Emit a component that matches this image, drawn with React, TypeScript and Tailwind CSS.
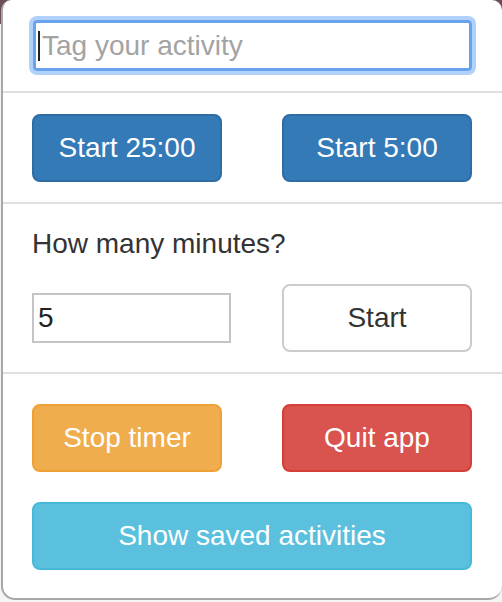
import { useState } from "react";

const font = { fontFamily: '"Liberation Sans", Arial, sans-serif' };

function Divider() {
  return <div className="h-[2px] w-full bg-[#e0e0e0]" />;
}

export default function App() {
  const [tag, setTag] = useState("");
  const [minutes, setMinutes] = useState("5");

  const btn =
    "h-[68px] w-full rounded-[8px] border-2 text-[28px] leading-[40px] text-white flex items-center justify-center";

  return (
    <div
      className="w-[502px] h-[602px] overflow-hidden bg-[linear-gradient(to_bottom,#6d4c5c_0px,#6d4c5c_24px,#f4f4f4_24px)]"
      style={font}
    >
      <div className="ml-[1px] h-[600px] w-[501px] bg-white rounded-t-[10px] rounded-b-[14px] border-l-2 border-b-2 border-[#a8a8a8] flex flex-col text-[#333]">
        {/* Tag input */}
        <div className="pt-[20px] pb-[20px] pl-[30px] pr-[30px]">
          <div className="relative">
            <input
              value={tag}
              onChange={(e) => setTag(e.target.value)}
              placeholder="Tag your activity"
              className="h-[51px] w-full rounded-[4px] border-[3px] border-[#69a2ed] shadow-[0_0_0_4px_#b0d1f9] pl-[6px] text-[28px] text-[#333] placeholder:text-[#a3a3a3] outline-none"
            />
            {tag === "" && (
              <span className="absolute left-[5px] top-[11px] h-[30px] w-[2px] bg-[#222]" />
            )}
          </div>
        </div>
        <Divider />

        {/* Quick starts */}
        <div className="grid grid-cols-2 gap-x-[60px] pt-[21px] pb-[20px] pl-[29px] pr-[30px]">
          <button className={`${btn} bg-[#337ab7] border-[#2e6da4]`}>Start 25:00</button>
          <button className={`${btn} bg-[#337ab7] border-[#2e6da4]`}>Start 5:00</button>
        </div>
        <Divider />

        {/* Custom minutes */}
        <div className="pt-[20px] pb-[20px] pl-[29px] pr-[30px]">
          <div className="text-[28px] leading-[40px] mb-[20px]">How many minutes?</div>
          <div className="grid grid-cols-2 gap-x-[60px] items-center">
            <input
              value={minutes}
              onChange={(e) => setMinutes(e.target.value)}
              className="h-[50px] w-[199px] border-2 border-[#c4c4c4] pl-[4px] text-[28px] text-[#222] outline-none"
            />
            <button className="h-[68px] w-full rounded-[8px] border-2 border-[#cccccc] bg-white text-[28px] leading-[40px] text-[#333]">
              Start
            </button>
          </div>
        </div>
        <Divider />

        {/* Controls */}
        <div className="pt-[30px] pl-[29px] pr-[30px] flex flex-col gap-[30px]">
          <div className="grid grid-cols-2 gap-x-[60px]">
            <button className={`${btn} bg-[#f0ad4e] border-[#eea236]`}>Stop timer</button>
            <button className={`${btn} bg-[#d9534f] border-[#d43f3a]`}>Quit app</button>
          </div>
          <button className={`${btn} bg-[#5bc0de] border-[#46b8da]`}>Show saved activities</button>
        </div>
      </div>
    </div>
  );
}
